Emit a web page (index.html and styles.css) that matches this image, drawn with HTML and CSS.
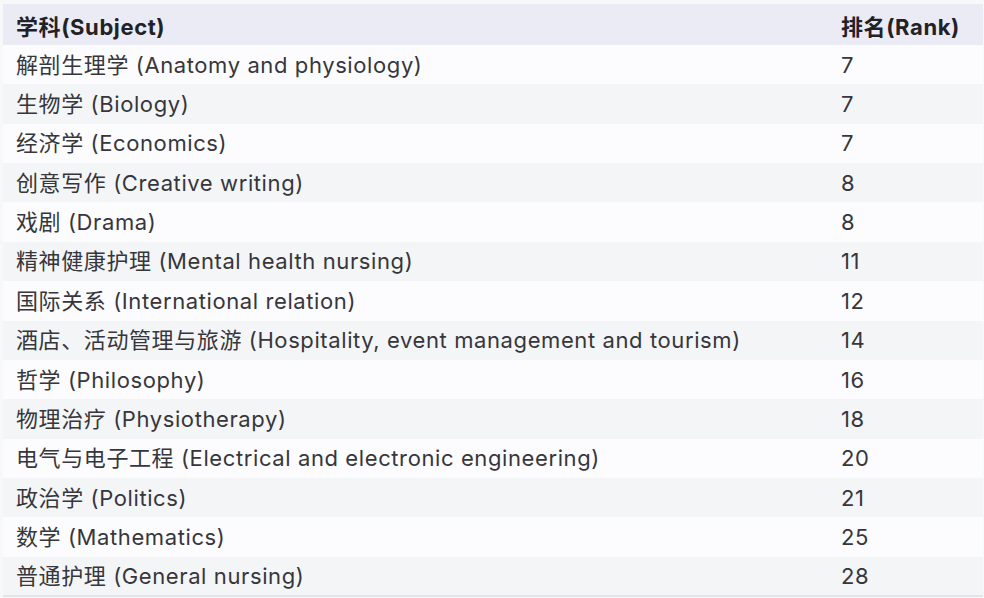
FILE: index.html
```html
<!DOCTYPE html>
<html lang="zh">
<head>
<meta charset="utf-8">
<link rel="stylesheet" href="styles.css">
</head>
<body>
<div class="wrap">
<table class="rank">
<thead>
<tr><th class="c1">学科(Subject)</th><th class="c2">排名(Rank)</th></tr>
</thead>
<tbody>
<tr><td>解剖生理学 (Anatomy and physiology)</td><td>7</td></tr>
<tr><td>生物学 (Biology)</td><td>7</td></tr>
<tr><td>经济学 (Economics)</td><td>7</td></tr>
<tr><td>创意写作 (Creative writing)</td><td>8</td></tr>
<tr><td>戏剧 (Drama)</td><td>8</td></tr>
<tr><td>精神健康护理 (Mental health nursing)</td><td>11</td></tr>
<tr><td>国际关系 (International relation)</td><td>12</td></tr>
<tr><td>酒店、活动管理与旅游 (Hospitality, event management and tourism)</td><td>14</td></tr>
<tr><td>哲学 (Philosophy)</td><td>16</td></tr>
<tr><td>物理治疗 (Physiotherapy)</td><td>18</td></tr>
<tr><td>电气与电子工程 (Electrical and electronic engineering)</td><td>20</td></tr>
<tr><td>政治学 (Politics)</td><td>21</td></tr>
<tr><td>数学 (Mathematics)</td><td>25</td></tr>
<tr><td>普通护理 (General nursing)</td><td>28</td></tr>
</tbody>
</table>
</div>
</body>
</html>
```
FILE: styles.css
```css
html, body {
  margin: 0;
  padding: 0;
  background: #f7f8fa;
}
.wrap {
  padding: 4px 1px 0 3px;
}
.rank {
  width: 100%;
  border-collapse: collapse;
  font-family: Inter, "Noto Sans CJK SC", sans-serif;
  font-size: 22px;
  letter-spacing: 0.6px;
  color: #36363b;
  border-bottom: 2px solid #e3e4e8;
}
.rank th {
  background: #ebebf6;
  font-weight: 700;
  color: #222226;
  text-align: left;
  height: 41px;
  padding: 0 0 0 13px;
  box-sizing: border-box;
}
.rank th.c1 { width: 825px; }
.rank td {
  height: 39.36px;
  padding: 0 0 0 13px;
  box-sizing: border-box;
  line-height: 1;
}
.rank tbody tr:nth-child(odd) td { background: #fcfcfe; }
.rank tbody tr:nth-child(even) td { background: #f4f5f7; }
```
